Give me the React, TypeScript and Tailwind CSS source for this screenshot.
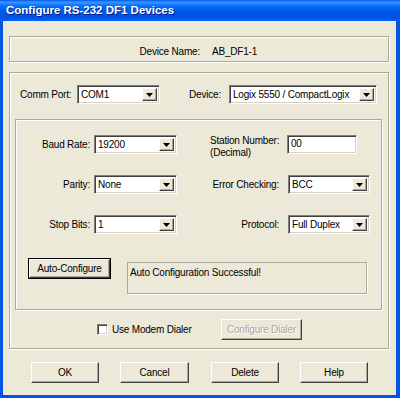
const sunken =
  "border border-t-[#808080] border-l-[#808080] border-b-white border-r-white shadow-[inset_1px_1px_0_#404040,inset_-1px_-1px_0_#D4D0C8]";
const raised =
  "border border-t-white border-l-white border-b-[#404040] border-r-[#404040] shadow-[inset_-1px_-1px_0_#ACA899] bg-[#ECE9D8]";
const etched = "border border-[#ACA899] shadow-[inset_1px_1px_0_white,1px_1px_0_white]";

function Combo({ value, w }: { value: string; w: string }) {
  return (
    <div className={`${w} h-[19px] flex bg-white p-[2px] ${sunken}`}>
      <div className="flex-1 pl-[1px] leading-[13px] whitespace-nowrap overflow-hidden">{value}</div>
      <div className={`w-[15px] h-full flex items-center justify-center ${raised}`}>
        <svg width="7" height="4" viewBox="0 0 7 4">
          <polygon points="0,0 7,0 3.5,4" fill="#000" />
        </svg>
      </div>
    </div>
  );
}

function Button({ label, w, disabled }: { label: string; w: string; disabled?: boolean }) {
  return (
    <div className={`${w} h-[21px] flex items-center justify-center ${raised}`}>
      {disabled ? (
        <span className="text-[#ACA899] [text-shadow:1px_1px_0_white]">{label}</span>
      ) : (
        label
      )}
    </div>
  );
}

export default function App() {
  return (
    <div className="w-[400px] h-[398px] flex flex-col text-black text-[10px] tracking-[-0.2px] [font-family:'Liberation_Sans',Arial,sans-serif]">
      {/* title bar */}
      <div className="h-[21px] flex items-center pl-[6px] bg-[linear-gradient(to_bottom,#0058EE_0%,#3A93FF_10%,#288EFF_16%,#127DFF_22%,#036FFC_30%,#0262EE_42%,#0057E5_56%,#0054E3_76%,#0055EB_88%,#005BF5_95%,#026AFE_100%)]">
        <span className="text-white font-bold text-[11.5px] tracking-normal [text-shadow:1px_1px_0_#0A1883]">
          Configure RS-232 DF1 Devices
        </span>
      </div>

      {/* body */}
      <div className="h-[377px] flex flex-col bg-[#ECE9D8] border-l-[3px] border-r-[4px] border-b-[3px] border-[#0055E5] px-[6px]">
        {/* device name */}
        <div className={`mt-[15px] w-[380px] h-[26px] flex items-center pt-[5px] ${etched}`}>
          <div className="w-[190px] text-right">Device Name:</div>
          <div className="ml-[12px]">AB_DF1-1</div>
        </div>

        {/* main group */}
        <div className={`mt-[10px] w-[380px] h-[277px] flex flex-col ${etched}`}>
          <div className="mt-[12px] h-[19px] flex items-center pl-[10px]">
            <div className="w-[57px]">Comm Port:</div>
            <Combo value="COM1" w="w-[83px]" />
            <div className="w-[69px] text-right pr-[8px]">Device:</div>
            <Combo value="Logix 5550 / CompactLogix" w="w-[148px]" />
          </div>

          {/* serial settings */}
          <div className={`mt-[15px] ml-[5px] w-[367px] h-[191px] flex flex-col ${etched}`}>
            <div className="mt-[15px] h-[19px] flex items-center">
              <div className="w-[74px] text-right">Baud Rate:</div>
              <div className="ml-[4px]">
                <Combo value="19200" w="w-[83px]" />
              </div>
              <div className="w-[110px] pl-[33px] leading-[12px] mt-[4px]">
                <div>Station Number:</div>
                <div>(Decimal)</div>
              </div>
              <div className={`w-[70px] h-[19px] bg-white pl-[3px] leading-[16px] ${sunken}`}>00</div>
            </div>

            <div className="mt-[21px] h-[19px] flex items-center">
              <div className="w-[74px] text-right">Parity:</div>
              <div className="ml-[4px]">
                <Combo value="None" w="w-[83px]" />
              </div>
              <div className="w-[102px] text-right">Error Checking:</div>
              <div className="ml-[9px]">
                <Combo value="BCC" w="w-[82px]" />
              </div>
            </div>

            <div className="mt-[21px] h-[19px] flex items-center">
              <div className="w-[74px] text-right">Stop Bits:</div>
              <div className="ml-[4px]">
                <Combo value="1" w="w-[83px]" />
              </div>
              <div className="w-[102px] text-right">Protocol:</div>
              <div className="ml-[9px]">
                <Combo value="Full Duplex" w="w-[82px]" />
              </div>
            </div>

            <div className="mt-[24px] flex items-start">
              <div className="ml-[12px] w-[83px] h-[21px] border border-black">
                <div className={`w-full h-full flex items-center justify-center ${raised}`}>Auto-Configure</div>
              </div>
              <div className="ml-[16px] mt-[4px] w-[240px] h-[32px] border border-[#ACA899] shadow-[1px_1px_0_white] pl-[2px] pt-[2px]">
                Auto Configuration Successful!
              </div>
            </div>
          </div>

          <div className="mt-[9px] h-[20px] flex items-center">
            <div className={`ml-[87px] w-[11px] h-[11px] bg-white ${sunken}`} />
            <div className="ml-[4px] w-[80px]">Use Modem Dialer</div>
            <div className="ml-[29px]">
              <Button label="Configure Dialer" w="w-[81px]" disabled />
            </div>
          </div>
        </div>

        {/* dialog buttons */}
        <div className="mt-[13px] flex pl-[22px]">
          <Button label="OK" w="w-[68px]" />
          <div className="ml-[21px]">
            <Button label="Cancel" w="w-[69px]" />
          </div>
          <div className="ml-[22px]">
            <Button label="Delete" w="w-[68px]" />
          </div>
          <div className="ml-[21px]">
            <Button label="Help" w="w-[68px]" />
          </div>
        </div>
      </div>
    </div>
  );
}
